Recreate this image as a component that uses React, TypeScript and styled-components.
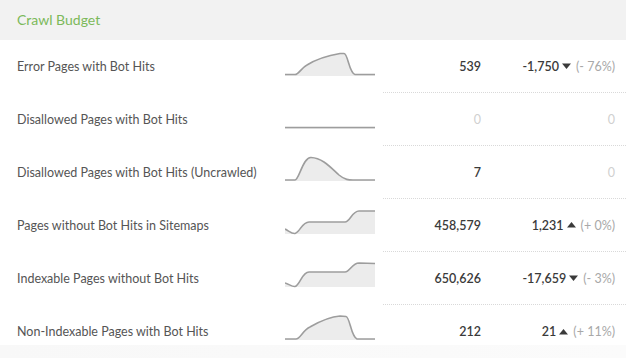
import React from "react";
import styled, { createGlobalStyle } from "styled-components";

const Global = createGlobalStyle`
  html, body { margin: 0; padding: 0; background: #ffffff; }
  body { font-family: Lato, "Open Sans", Arial, sans-serif; -webkit-font-smoothing: antialiased; }
`;

const Card = styled.div`
  position: relative;
  width: 626px;
  height: 358px;
  overflow: hidden;
  background: #ffffff;
  &::after {
    content: "";
    position: absolute;
    left: 0;
    right: 0;
    bottom: 0;
    height: 13px;
    background: linear-gradient(to right, #f8f8f8, #f9f9f9 40%, #fbfbfb);
  }
`;

const Header = styled.div`
  height: 40px;
  background: #f2f2f2;
  display: flex;
  align-items: center;
  padding-left: 17px;
  box-sizing: border-box;
`;

const Title = styled.h2`
  margin: 0;
  font-size: 14px;
  font-weight: 400;
  color: #7cb95a;
  margin-top: -2px;
`;

const Row = styled.div`
  display: grid;
  grid-template-columns: 268px 90px 1fr;
  padding-left: 17px;
  height: 53px;
  box-sizing: border-box;
`;

const Label = styled.div`
  font-size: 12.5px;
  color: #555555;
  display: flex;
  align-items: center;
`;

const Spark = styled.div<{ $top: number }>`
  padding-top: ${(p) => p.$top}px;
`;

const Metrics = styled.div<{ $last?: boolean }>`
  margin-left: 8px;
  display: flex;
  align-items: center;
  border-bottom: ${(p) => (p.$last ? "none" : "1px dotted #d9d9d9")};
  padding-right: 11px;
`;

const Value = styled.div<{ $zero?: boolean }>`
  width: 98px;
  text-align: right;
  font-size: 12.5px;
  font-weight: ${(p) => (p.$zero ? 400 : 600)};
  color: ${(p) => (p.$zero ? "#d0d0d0" : "#3a3a3a")};
`;

const Delta = styled.div`
  flex: 1;
  display: flex;
  justify-content: flex-end;
  align-items: center;
  font-size: 12.5px;
`;

const DeltaNum = styled.span<{ $zero?: boolean }>`
  font-weight: ${(p) => (p.$zero ? 400 : 600)};
  color: ${(p) => (p.$zero ? "#d0d0d0" : "#3a3a3a")};
`;

const Arrow = styled.svg`
  margin: 0 5px 0 3px;
`;

const Pct = styled.span`
  color: #a8a8a8;
`;

type RowData = {
  label: string;
  value: string;
  delta: string;
  dir?: "up" | "down";
  pct?: string;
  top: number;
  line: string;
};

const rows: RowData[] = [
  {
    label: "Error Pages with Bot Hits",
    value: "539",
    delta: "-1,750",
    dir: "down",
    pct: "(- 76%)",
    top: 11,
    line: "M0 23.5 L10 23.5 C14 23.5 16 17 22 14 C30 9 40 5 55 2.5 L59 2.5 C63 2.5 64 22 70 23.5 L90 23.5",
  },
  {
    label: "Disallowed Pages with Bot Hits",
    value: "0",
    delta: "0",
    top: 11,
    line: "M0 23.5 L90 23.5",
  },
  {
    label: "Disallowed Pages with Bot Hits (Uncrawled)",
    value: "7",
    delta: "0",
    top: 10,
    line: "M0 24 L10 24 C14 24 18 1 26 1.5 C38 2 46 12 54 19 C60 24 64 24 68 24 L90 24",
  },
  {
    label: "Pages without Bot Hits in Sitemaps",
    value: "458,579",
    delta: "1,231",
    dir: "up",
    pct: "(+ 0%)",
    top: 10,
    line: "M0 20 C4 22 7 25 10 24.5 C15 23 17 13 24 13 L60 13 C65 13 67 2 74 2 L90 2",
  },
  {
    label: "Indexable Pages without Bot Hits",
    value: "650,626",
    delta: "-17,659",
    dir: "down",
    pct: "(- 3%)",
    top: 10,
    line: "M0 21 C4 22 7 25 10 24.5 C15 23 17 10 24 10 L60 10 C65 10 67 1 74 1 L90 1.5",
  },
  {
    label: "Non-Indexable Pages with Bot Hits",
    value: "212",
    delta: "21",
    dir: "up",
    pct: "(+ 11%)",
    top: 10,
    line: "M0 24 L11 24 C15 24 18 15 25 12 C32 8 42 2 55 1 L61 1.5 C65 2 66 22 72 24 L90 24",
  },
];

function Sparkline({ d }: { d: string }) {
  return (
    <svg width="90" height="26" viewBox="0 0 90 26">
      <path d={`${d} L90 25 L0 25 Z`} fill="#ececec" stroke="none" />
      <path d={d} fill="none" stroke="#9d9d9d" strokeWidth="1.6" strokeLinejoin="round" />
    </svg>
  );
}

function Tri({ dir }: { dir: "up" | "down" }) {
  return (
    <Arrow width="9" height="6" viewBox="0 0 9 6">
      {dir === "down" ? (
        <path d="M0 0.5 L9 0.5 L4.5 6 Z" fill="#3a3a3a" />
      ) : (
        <path d="M0 5.5 L9 5.5 L4.5 0 Z" fill="#3a3a3a" />
      )}
    </Arrow>
  );
}

export default function App() {
  return (
    <>
      <Global />
      <Card>
        <Header>
          <Title>Crawl Budget</Title>
        </Header>
        {rows.map((r, i) => (
          <Row key={r.label}>
            <Label>{r.label}</Label>
            <Spark $top={r.top}>
              <Sparkline d={r.line} />
            </Spark>
            <Metrics $last={i === rows.length - 1}>
              <Value $zero={r.value === "0"}>{r.value}</Value>
              <Delta>
                <DeltaNum $zero={r.delta === "0"}>{r.delta}</DeltaNum>
                {r.dir && <Tri dir={r.dir} />}
                {r.pct && <Pct>{r.pct}</Pct>}
              </Delta>
            </Metrics>
          </Row>
        ))}
      </Card>
    </>
  );
}
